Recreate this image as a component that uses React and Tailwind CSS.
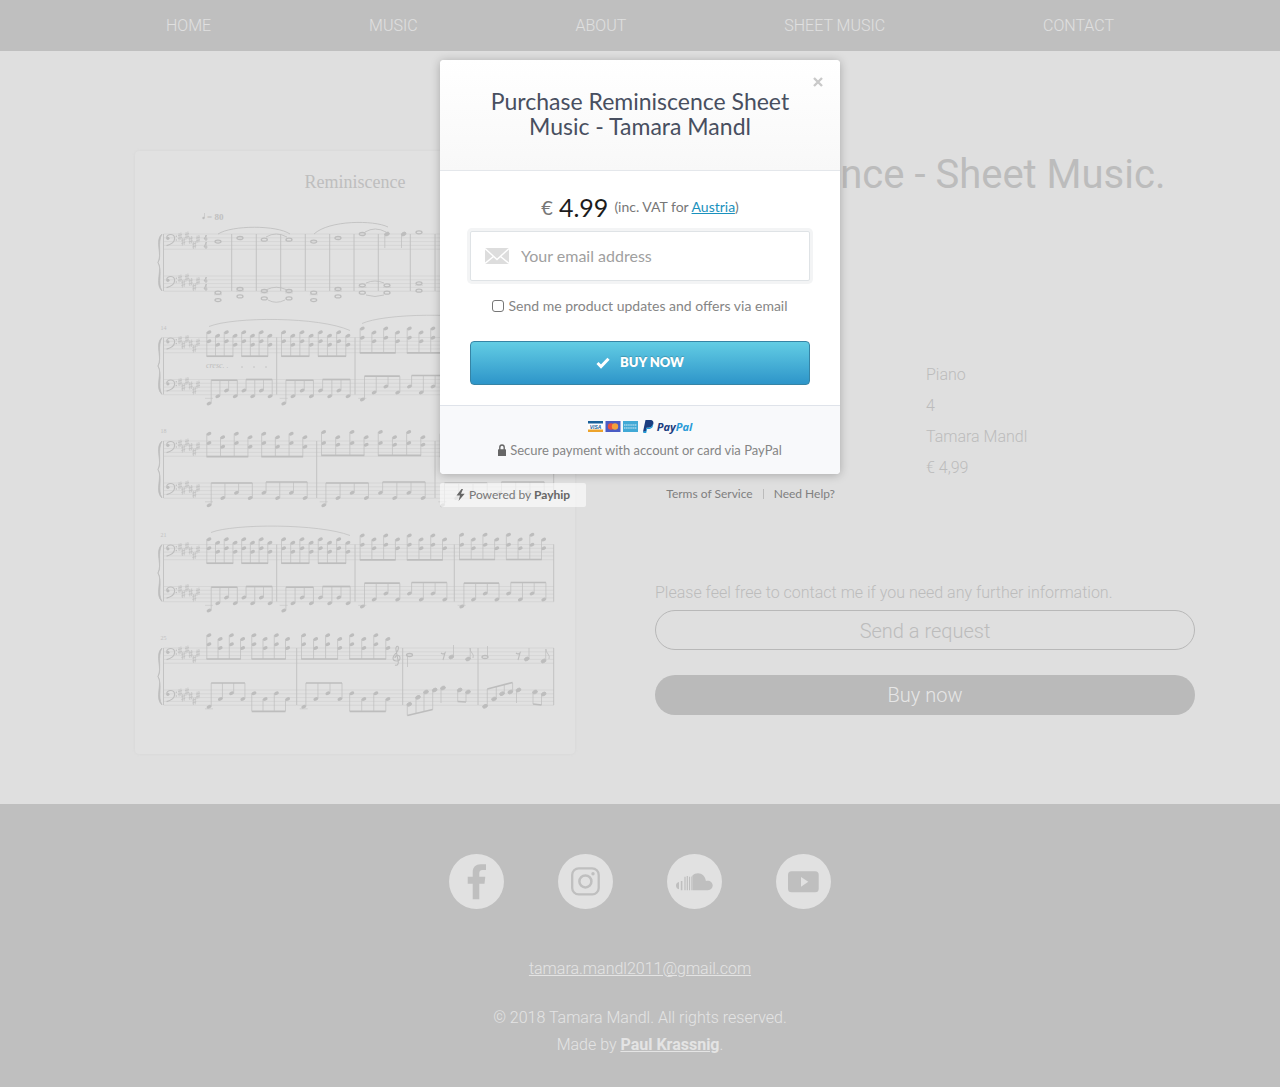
import React from "react";

const INK = "#bdbdbd";
const LINE = "#d1d1d1";

/* Horizontal positions are in sheet units; heights are relative to a staff's top line. */
const spread = (from, to) =>
  Array.from({ length: 8 }, (_, i) => from + ((to - from) * i) / 7);

const systems = [
  { top: 84, number: "", bars: [97.7, 122.3, 146.7, 171.3, 195.7, 220, 244.3, 276.3, 301], measures: [] },
  {
    top: 187.5,
    number: "14",
    bars: [142.7, 221],
    slurs: ["M75 -11C100 -21 185 -21 216 -7", "M228 -14C250 -24 330 -26 372 -14"],
    measures: [
      { xs: spread(75, 136), hi: [-5.3, -1.7], lo: [3.7, 7.3], beam: 18.7, bass: [24, 16.7, 11, 16.7, 11, 16.7, 11, 16.7], bassBeams: [0.7, 0] },
      { xs: spread(149.7, 214), hi: [-5.3, -1.7], lo: [3.7, 7.3], beam: 18.7, bass: [24, 16.7, 11, 16.7, 11, 16.7, 11, 16.7], bassBeams: [0.7, 0] },
      { xs: spread(228.3, 310.7), hi: [-9, -5], lo: [0.3, 3.7], beam: 15.3, bass: [20, 13, 7, 13, 7, 13, 7, 13], bassBeams: [-3.3, -4] },
    ],
  },
  {
    top: 291,
    number: "18",
    bars: [182.7, 301],
    measures: [
      { xs: spread(75, 171), hi: [-7.3, -3.7], lo: [2, 5.7], beam: 15.7, bass: [22.3, 15, 9.7, 15, 9.7, 15, 9.7, 15], bassBeams: [0, -1] },
      { xs: spread(189.7, 289), hi: [-9, -3.7], lo: [2, 3.7], beam: 14.3, bass: [22.3, 15, 9.7, 15, 9.7, 15, 9.7, 15], bassBeams: [0, -1] },
      { xs: spread(308.3, 408), hi: [-7.3, -3.7], lo: [2, 5.7], beam: 15.7, bass: [22.3, 15, 9.7, 15, 9.7, 15, 9.7, 15], bassBeams: [0, -1] },
    ],
  },
  {
    top: 394.5,
    number: "21",
    bars: [142.7, 221, 320.3],
    slurs: ["M77 -12C100 -21 185 -21 216 -9"],
    measures: [
      { xs: spread(75, 136), hi: [-5.3, -1.7], lo: [3.7, 7.3], beam: 18.7, bass: [24, 16.7, 11, 16.7, 11, 16.7, 11, 16.7], bassBeams: [0.7, 0] },
      { xs: spread(149.7, 214), hi: [-5.3, -1.7], lo: [3.7, 7.3], beam: 18.7, bass: [24, 16.7, 11, 16.7, 11, 16.7, 11, 16.7], bassBeams: [0.7, 0] },
      { xs: spread(228.3, 310.7), hi: [-9, -5], lo: [0.3, 3.7], beam: 15.3, bass: [20, 13, 7, 13, 7, 13, 7, 13], bassBeams: [-3.3, -4] },
      { xs: spread(327.7, 409.7), hi: [-9.7, -5], lo: [0.3, 3.7], beam: 15, bass: [20, 13, 7, 13, 7, 13, 7, 13], bassBeams: [-3.3, -4] },
    ],
  },
  {
    top: 498,
    number: "25",
    bars: [162.7, 268.7, 344],
    measures: [
      { xs: spread(75, 153.7), hi: [-12.7, -9], lo: [-3.7, 0], beam: 11, bass: [16.7, 9, 3.3, 9, 3.3, 9, 3.3, 9], bassBeams: [-7, 21.3] },
      { xs: spread(169.7, 254), hi: [-12.7, -9], lo: [-3.7, 0], beam: 11, bass: [16.7, 9, 3.3, 9, 3.3, 9, 3.3, 9], bassBeams: [-7, 21.3] },
    ],
  },
];

function Head({ x, y }) {
  return <ellipse cx={x} cy={y} rx="2.5" ry="1.7" fill={INK} transform={`rotate(-25 ${x} ${y})`} />;
}

function Whole({ x, y }) {
  return <ellipse cx={x} cy={y} rx="3" ry="1.5" fill="none" stroke={INK} strokeWidth="1.3" />;
}

function Stem({ x, from, to }) {
  return <path d={`M${x} ${from}V${to}`} stroke={INK} strokeWidth="0.7" />;
}

function Beam({ x1, x2, y1, y2 = y1 }) {
  return <path d={`M${x1} ${y1}L${x2} ${y2}`} stroke={INK} strokeWidth="1.7" />;
}

function Measure({ xs, hi, lo, beam, bass, bassBeams }) {
  return (
    <g>
      {xs.map((x, i) => (
        <g key={x}>
          <Head x={x} y={hi[i % 2]} />
          <Head x={x} y={lo[i % 2]} />
          <Stem x={x - 2.2} from={hi[i % 2]} to={beam} />
        </g>
      ))}
      <Beam x1={xs[0] - 2.5} x2={xs[3] - 1.9} y1={beam} />
      <Beam x1={xs[4] - 2.5} x2={xs[7] - 1.9} y1={beam} />
      <g transform="translate(0 42)">
        {xs.map((x, i) => {
          const end = bassBeams[i < 4 ? 0 : 1];
          return (
            <g key={x}>
              <Head x={x} y={bass[i]} />
              <Stem x={end > bass[i] ? x - 2.2 : x + 2.2} from={bass[i]} to={end} />
            </g>
          );
        })}
        <path d={`M${xs[0] - 4} 18.8h8`} stroke={INK} strokeWidth="0.5" />
        {bassBeams.map((y, k) => {
          const side = y > 10 ? -2.2 : 2.2;
          return <Beam key={k} x1={xs[k * 4] + side} x2={xs[k * 4 + 3] + side} y1={y} />;
        })}
      </g>
    </g>
  );
}

const sharps = [[46, 2.5], [49.3, 7.5], [53, 1.5], [56.7, 6], [60.3, 11], [64, 5]];

function Staff({ y }) {
  return (
    <g transform={`translate(0 ${y})`}>
      {[0, 3.8, 7.6, 11.4, 15.2].map((l) => (
        <path key={l} d={`M29.5 ${l}H420`} stroke={LINE} strokeWidth="0.7" />
      ))}
      <circle cx="33.9" cy="4.3" r="1.6" fill={INK} />
      <path d="M32.6 3.6C33.4-0.6 40.8-0.8 40.6 4.6C40.5 8 37 10.6 32.6 11.6" fill="none" stroke={INK} strokeWidth="1.1" />
      <circle cx="42.3" cy="2.3" r="0.7" fill={INK} />
      <circle cx="42.3" cy="6" r="0.7" fill={INK} />
      {sharps.map(([x, sy]) => (
        <path
          key={x}
          d={`M${x - 0.9} ${sy - 3.4}v7.4M${x + 0.9} ${sy - 4}v7.4M${x - 2} ${sy - 0.8}l4-1.2M${x - 2} ${sy + 2}l4-1.2`}
          stroke={INK}
          strokeWidth="0.65"
        />
      ))}
    </g>
  );
}

const openingHigh = [[84, 7.6], [106, 4], [130.3, 5.7], [155, 5.7], [179.7, 7.6], [204, 4], [228.3, 0], [285, -1.7]];
const openingLow = [[84, 16.7], [106, 13], [130.3, 15], [155, 15], [179.7, 16.7], [204, 13], [228.3, 9.3], [253, 9.3], [285, 7.3]];
const timeDigits = [
  "M72.5 1l-2.5 4h3.5M72 1v6M72.5 8l-2.5 5h3.5M72 8v7",
  "M72.5 43l-2.5 4h3.5M72 43v6M72.5 50l-2.5 5h3.5M72 50v7",
];

function Opening() {
  return (
    <g fill="none" stroke={INK} strokeWidth="0.8">
      {openingHigh.map(([x, y]) => <Whole key={x} x={x} y={y} />)}
      <g transform="translate(0 42)">
        {openingLow.map(([x, y]) => (
          <g key={x}>
            <Whole x={x} y={y} />
            <Whole x={x} y={y + 7.4} />
            <path d={`M${x - 4} ${y + 2}h8`} strokeWidth="0.4" />
          </g>
        ))}
        <path d="M133 13.5Q142 9 152 13.5M134 24Q142 28.5 151 24M232 7Q241 3 250 7M232 19Q241 22 250 19" />
      </g>
      <Head x={253} y={0} />
      <Head x={269.7} y={0} />
      <Stem x={250.8} from={0} to={14} />
      <Stem x={267.5} from={0} to={14} />
      <path d="M84 0C98-9 143-9 156 0M132 3Q142-3 153 3M180 0C195-14 240-14 254-7M231-2Q241-8 252-2" />
      {timeDigits.map((d) => <path key={d} d={d} strokeWidth="1" />)}
    </g>
  );
}

function Ending() {
  return (
    <g fill="none" stroke={INK} strokeWidth="0.8">
      <path d="M261 17c3 1 4-2 3-5l-2-10c-1-5 4-5 2 0c-1 3-5 5-5 8c0 4 7 4 7 0c0-4-5-3-5 0" strokeWidth="1.1" />
      <Whole x={275.5} y={7} />
      <Stem x={273.5} from={7} to={19} />
      <path d="M307 5q2 2 4 0l-2 7M382 5q2 2 4 0l-2 7" strokeWidth="1.1" />
      <Head x={317.3} y={9} /><Stem x={319.5} from={9} to={-3} />
      <Head x={334} y={11} /><Stem x={336.2} from={11} to={0} />
      <path d="M336 0q0 3 2 5t1 5" />
      <Whole x={351} y={9} /><Stem x={353.5} from={9} to={-2} />
      <Head x={392.7} y={11} /><Stem x={395} from={11} to={0} />
      <Head x={409.5} y={13} /><Stem x={411.7} from={13} to={1} />
      <path d="M412 1q0 3 2 5t1 5" />
      <g transform="translate(0 42)">
        {[[275.3, 14.3], [284, 7.3], [292, 2], [300.7, 0]].map(([x, y], i) => (
          <g key={x}><Head x={x} y={y} /><Stem x={x - 2} from={y} to={25.5 - i * 2} /></g>
        ))}
        <Beam x1={273.3} y1={25.5} x2={298.7} y2={19.5} />
        <Head x={309} y={-2} /><Stem x={307} from={-2} to={13} />
        <Head x={325.7} y={0} /><Head x={334} y={2} />
        <Stem x={323.7} from={0} to={11.5} /><Stem x={332} from={2} to={12} />
        <Beam x1={323.7} y1={11.5} x2={332} y2={12} />
        {[[351, 16.3], [360, 9], [368, 3.7], [376.3, 2]].map(([x, y], i) => (
          <g key={x}><Head x={x} y={y} /><Stem x={x + 2.3} from={y} to={-1 - i * 2} /></g>
        ))}
        <Beam x1={353.3} y1={-1} x2={378.6} y2={-7.5} />
        <Head x={384.5} y={0} /><Stem x={382.5} from={0} to={13} />
        <Head x={401} y={2} /><Head x={409.7} y={4} />
        <Stem x={399} from={2} to={14} /><Stem x={407.5} from={4} to={15} />
        <Beam x1={399} y1={14} x2={407.5} y2={15} />
      </g>
    </g>
  );
}

function SheetPreview() {
  return (
    <svg viewBox="1 1 440 603" className="block w-full" role="img" aria-label="Reminiscence, first page">
      <text x="221" y="38" textAnchor="middle" fontSize="18" fill="#bebebe" fontFamily="Liberation Serif, serif">Reminiscence</text>
      <circle cx="69.5" cy="68" r="1.2" fill={INK} />
      <path d="M70.5 68V63" stroke={INK} strokeWidth="0.6" />
      <text x="73" y="69.5" fontSize="9" fontWeight="bold" fill="#c0c0c0" fontFamily="Liberation Serif, serif">= 80</text>
      <text x="72" y="218" fontSize="8" fontStyle="italic" fill={INK} fontFamily="Liberation Serif, serif">cresc. .</text>
      <path d="M107 217h2M119 217h2M131 217h2" stroke={INK} strokeWidth="0.8" />
      {systems.map((s) => (
        <g key={s.top} transform={`translate(0 ${s.top})`}>
          <text x="26.5" y="-8" fontSize="6" fill="#c2c2c2" fontFamily="Liberation Serif, serif">{s.number}</text>
          <Staff y={0} />
          <Staff y={42} />
          <path d="M28 0C20 6 29 22 24 28.5C29 35 20 50 28 57C23 48 29 38 24 28.5C28 19 23 9 28 0Z" fill={INK} stroke={INK} strokeWidth="0.7" />
          {[29.5, ...s.bars, 419.7].map((x) => (
            <path key={x} d={`M${x} 0V57`} stroke="#c0c0c0" strokeWidth="0.9" />
          ))}
          {s.slurs?.map((d) => <path key={d} d={d} fill="none" stroke={INK} strokeWidth="0.7" />)}
          {s.measures.map((m) => <Measure key={m.xs[0]} {...m} />)}
        </g>
      ))}
      <g transform="translate(0 84)"><Opening /></g>
      <g transform="translate(0 498)"><Ending /></g>
    </svg>
  );
}

const socials = [
  { name: "Facebook", art: <path d="M23.7 45.3V29.7H18.7V22.7H23.7V18.5C23.7 13 27 10.3 31.5 10.3H37V16H33.5C31 16 30.3 17.3 30.3 19.3V22.7H36.3L35.5 29.7H30.3V45.3Z" fill="#bfbfbf" /> },
  {
    name: "Instagram",
    art: (
      <g fill="none" stroke="#bfbfbf">
        <rect x="14.2" y="14.4" width="26.5" height="26" rx="6.5" strokeWidth="2.3" />
        <circle cx="27.4" cy="27.4" r="6" strokeWidth="2.5" />
        <circle cx="35" cy="19.8" r="1.7" fill="#bfbfbf" stroke="none" />
      </g>
    ),
  },
  {
    name: "SoundCloud",
    art: (
      <g fill="#bfbfbf">
        <path d="M12 28v7.3C10 35 9 33.5 9 31.6S10 28.4 12 28ZM13.8 27h1.6v9.3h-1.6ZM17.4 22.7h1.2v13.6h-1.2ZM19.7 22h1.2v14.3h-1.2ZM22 22.7h1.1v13.6H22ZM24 22.5h.7v13.8H24Z" />
        <path d="M25.3 36.3V21.7C27 20 29 19.3 31 19.3C35 19.3 38.3 22.3 38.9 27C42.5 25.9 45.7 28.3 45.7 31.6C45.7 34.3 43.7 36.3 41 36.3Z" />
      </g>
    ),
  },
  {
    name: "YouTube",
    art: (
      <g>
        <rect x="12" y="17.3" width="30.7" height="21" rx="3.5" fill="#bfbfbf" />
        <path d="M25 23L32.3 27.8L25 32.7Z" fill="#e1e1e1" />
      </g>
    ),
  },
];

function PaymentMarks() {
  return (
    <div className="flex h-4 items-center justify-center">
      <svg viewBox="0 0 67 14" className="h-3.5 w-[67px]" aria-hidden="true">
        <rect y="1" width="15" height="11" fill="#fff" />
        <rect y="1" width="15" height="2.5" fill="#1a6099" />
        <rect y="9.5" width="15" height="2.5" fill="#eda32b" />
        <text x="7.5" y="8.6" textAnchor="middle" fontSize="5" fontWeight="bold" fontStyle="italic" fill="#24619c" fontFamily="Liberation Sans, sans-serif">VISA</text>
        <rect x="17.5" y="1" width="15" height="11" fill="#4a5cc4" />
        <circle cx="23" cy="6.5" r="3.2" fill="#e8513f" />
        <circle cx="27" cy="6.5" r="3.2" fill="#f3a13c" />
        <rect x="35" y="1" width="15" height="11" fill="#41a9d6" />
        <path d="M36 5h13M36 8h13" stroke="#8ecbe6" strokeWidth="2" strokeDasharray="1.5 0.6" />
        <path d="M57.5 0h4.5c3 0 4 2 3.2 4.3c-.8 2.5-2.7 3.5-5 3.5h-1.5l-.7 4h-3Z" fill="#1b3d80" />
        <path d="M65 3.5c.5 3-1 5.5-4.5 5.5h-1.5l-.8 4h-3l.3-1.7h2.2l.8-3.6h1.8c2.7 0 4.2-1.7 4.7-4.2Z" fill="#1f9bd7" />
      </svg>
      <span className="ml-0.5 font-['Open_Sans',sans-serif] text-[11px] leading-4 font-bold text-[#1b3d80] italic">
        Pay<span className="text-[#2a9bd7]">Pal</span>
      </span>
    </div>
  );
}

function PurchaseDialog() {
  return (
    <div className="absolute inset-x-0 top-[60px] flex justify-center font-[Lato,sans-serif] font-normal text-[#777]">
      <div className="w-[400px]">
        <form
          role="dialog"
          aria-labelledby="purchase-title"
          onSubmit={(e) => e.preventDefault()}
          className="relative overflow-hidden rounded-sm bg-white shadow-[0_1px_10px_rgba(0,0,0,0.25)]"
        >
          <button type="button" aria-label="Close" className="absolute top-4 right-4 flex size-3 items-center justify-center">
            <svg viewBox="0 0 10 10" className="size-2.5 shrink-0"><path d="M1 1L9 9M9 1L1 9" stroke="#c9c9c9" strokeWidth="2.4" /></svg>
          </button>
          <header className="border-b border-[#e4e7eb] bg-linear-to-b from-white to-[#f8f8f8] px-10 pt-[29px] pb-[31px]">
            <h2 id="purchase-title" className="text-center text-[23px] leading-[25px] text-[#484f60]">
              Purchase Reminiscence Sheet Music - Tamara Mandl
            </h2>
          </header>
          <div className="px-[30px] pt-5 pb-5">
            <p className="flex items-center justify-center gap-1.5 leading-8">
              <span className="text-xl text-[#777]">€</span>
              <span className="text-[25px] text-[#1c1c1c]">4.99</span>
              <span className="text-sm leading-8">
                (inc. VAT for <a href="#country" className="text-[#1a91bd] underline">Austria</a>)
              </span>
            </p>
            <label className="mt-2 flex h-[50px] items-center rounded-xs border border-[#dfe3e6] bg-white px-3.5 shadow-[0_0_0_3px_#f3f4f5]">
              <svg viewBox="0 0 24 16" className="mr-3 h-4 w-6 shrink-0" aria-hidden="true">
                <rect width="24" height="16" fill="#ddd" />
                <path d="M0 0.5L12 11.5L24 0.5M0 15.5L8.5 8.5M24 15.5L15.5 8.5" fill="none" stroke="#fff" strokeWidth="1.4" />
              </svg>
              <input
                type="email"
                aria-label="Your email address"
                placeholder="Your email address"
                className="w-full text-base text-[#777] outline-none placeholder:text-[#a0a0a0]"
              />
            </label>
            <label className="mt-[15px] flex h-5 items-center justify-center gap-1 text-sm text-[#858585]">
              <input type="checkbox" className="size-3 appearance-none rounded-[3px] border border-[#767676] bg-white" />
              Send me product updates and offers via email
            </label>
            <button
              type="submit"
              className="mt-[25px] flex h-11 w-full items-center justify-center gap-2.5 rounded border border-[#3684a5] bg-linear-to-b from-[#62cde4] to-[#2d95c9] text-[13px] font-extrabold text-white [text-shadow:0_-1px_1px_rgba(0,0,0,0.2)]"
            >
              <svg viewBox="0 0 14 12" className="h-3 w-3.5" aria-hidden="true"><path d="M1.5 6L5 9.5L12.5 1.8" fill="none" stroke="#fff" strokeWidth="3" /></svg>
              BUY NOW
            </button>
          </div>
          <footer className="border-t border-[#dfe3ea] bg-[#f8f9fb] pt-[13px] pb-[14px] text-[13px] text-[#858585]">
            <PaymentMarks />
            <p className="mt-[5px] flex items-center justify-center gap-1 leading-5">
              <svg viewBox="0 0 8 12" className="h-3 w-2" aria-hidden="true">
                <path d="M1.8 6V3.2a2.2 2.2 0 0 1 4.4 0V6" fill="none" stroke="#666" strokeWidth="1.4" />
                <rect y="5.3" width="8" height="6.7" rx="0.6" fill="#666" />
              </svg>
              Secure payment with account or card via PayPal
            </p>
          </footer>
        </form>
        <div className="mt-[9px] flex items-start justify-between text-xs">
          <a href="#payhip" className="flex h-6 items-center rounded-xs bg-white/60 px-4">
            <svg viewBox="0 0 9 12" className="mr-1 h-3 w-[9px]" aria-hidden="true"><path d="M5.5 0L0.5 6.5H4L2.5 12L8.7 4.7H5L7 0Z" fill="#666" /></svg>
            Powered by&nbsp;<strong className="font-bold text-[#666]">Payhip</strong>
          </a>
          <nav className="flex h-[22px] items-center pr-[5px] text-[#808080]">
            <a href="#terms" className="mr-2.5 border-r border-[#bbb] pr-2.5 leading-[10px]">Terms of Service</a>
            <a href="#help">Need Help?</a>
          </nav>
        </div>
      </div>
    </div>
  );
}

export default function App() {
  return (
    <div className="relative bg-[#dfdfdf] font-[Roboto,sans-serif] text-base font-light text-[#bcbcbc]">
      <nav className="flex h-[51px] items-center justify-evenly bg-[#bfbfbf] px-2 text-[#e0e0e0]">
        {["HOME", "MUSIC", "ABOUT", "SHEET MUSIC", "CONTACT"].map((item) => (
          <a key={item} href="#top">{item}</a>
        ))}
      </nav>

      <main className="mx-auto grid max-w-[1110px] grid-cols-2 gap-[30px] pt-[100px] pb-[50px]">
        <div className="flex items-start justify-center">
          <div className="w-[440px] max-w-full rounded-sm bg-[#e1e1e1] shadow-[0_0_3px_#d5d5d5]">
            <SheetPreview />
          </div>
        </div>
        <section>
          <h1 className="text-[40px] leading-12 font-normal whitespace-nowrap">Reminiscence - Sheet Music.</h1>
          <ul className="mt-40 pl-[271px] leading-[31px]">
            {["Piano", "4", "Tamara Mandl", "€ 4,99"].map((v) => <li key={v}>{v}</li>)}
          </ul>
          <p className="mt-[98px] leading-6">Please feel free to contact me if you need any further information.</p>
          <button className="mt-[5px] block h-10 w-full rounded-full border border-[#b8b8b8] pt-0.5 text-xl">Send a request</button>
          <button className="mt-[25px] block h-10 w-full rounded-full bg-[#bababa] text-xl text-[#e6e6e6]">Buy now</button>
        </section>
      </main>

      <footer className="bg-[#bfbfbf] pt-[50px] pb-[29px] text-center leading-[27px] text-[#e4e4e4]">
        <div className="flex justify-center gap-[54px]">
          {socials.map(({ name, art }) => (
            <a key={name} href="#social" aria-label={name}>
              <svg viewBox="0 0 55 55" className="size-[55px]">
                <circle cx="27.5" cy="27.5" r="27.5" fill="#e1e1e1" />
                {art}
              </svg>
            </a>
          ))}
        </div>
        <p className="mt-[46px]"><a href="#mail" className="underline">tamara.mandl2011@gmail.com</a></p>
        <p className="mt-[22px]">© 2018 Tamara Mandl. All rights reserved.</p>
        <p>Made by <a href="#author" className="font-bold underline">Paul Krassnig</a>.</p>
      </footer>

      <PurchaseDialog />
    </div>
  );
}
